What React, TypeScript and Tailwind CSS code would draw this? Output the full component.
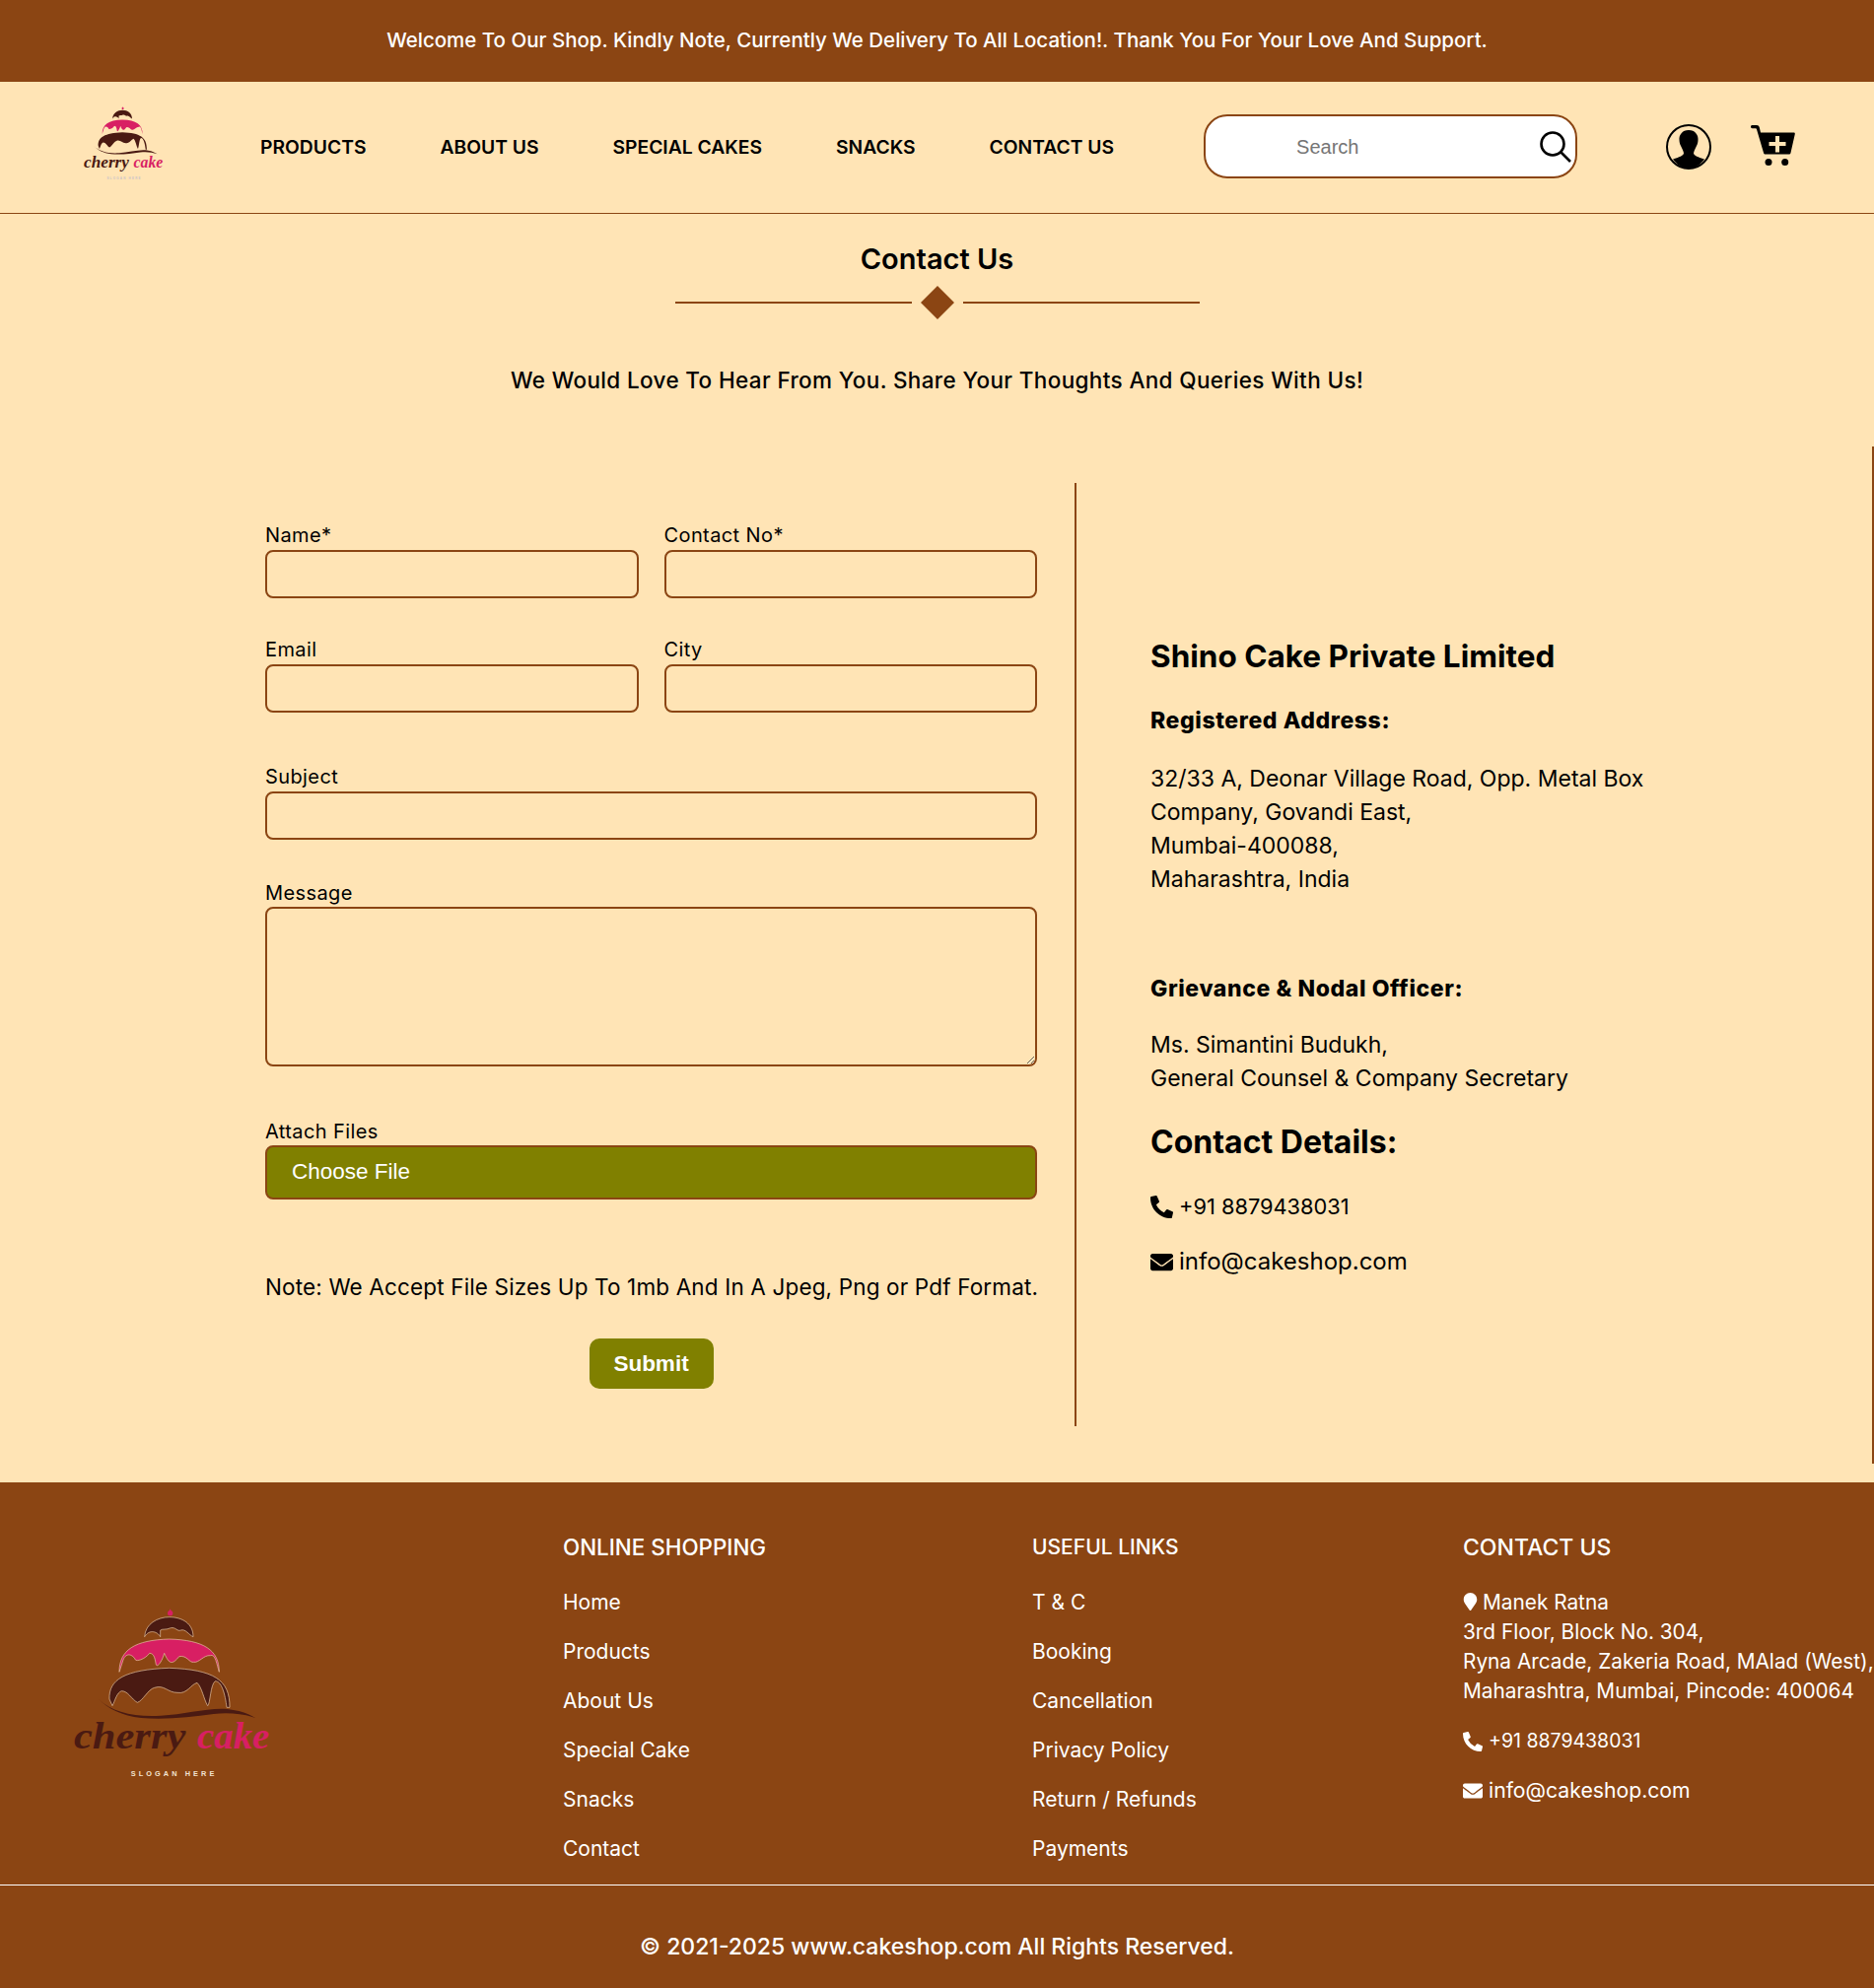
import { FaEnvelope, FaMapMarker, FaPhoneAlt } from "react-icons/fa";

function CakeLogo({ className, halo }: { className: string; halo?: boolean }) {
  const edge = halo ? "#e8c9a8" : "none";
  return (
    <svg viewBox="0 0 750 600" preserveAspectRatio="none" className={className}>
      <circle cx="368" cy="83" r="8" fill="#d81f63" />
      <path d="M368 70l4 8h-8z" fill="#d81f63" />
      <path
        d="M290 155C292 115 330 95 365 95C405 95 438 115 438 155C425 150 415 130 400 135C390 140 385 125 370 128C355 135 345 130 338 135L338 155C330 140 305 130 290 155Z"
        fill="#4a1a12"
        stroke={edge}
        strokeWidth="2"
      />
      <path
        d="M213 262C213 195 260 165 365 162C470 165 517 195 517 262C510 240 505 205 490 212C470 210 455 235 440 232C425 235 420 210 395 215C375 240 365 240 350 205C345 225 330 250 325 240C322 225 320 205 305 205C290 225 265 230 262 225C255 210 235 200 225 225Z"
        fill="#d81f63"
        stroke={edge}
        strokeWidth="2"
      />
      <path
        d="M183 345C180 285 230 255 365 250C500 255 550 285 549 370L540 370C535 330 525 290 505 290C490 300 490 360 482 365C470 345 465 310 450 295C430 300 420 330 390 325C360 325 350 300 320 310C300 315 285 350 268 355C250 345 240 320 220 320C205 325 200 350 192 365Z"
        fill="#4a1a12"
        stroke={edge}
        strokeWidth="2"
      />
      <path
        d="M150 345C190 385 260 400 340 395C420 392 500 365 560 378C590 382 610 392 628 402C590 390 550 385 500 390C430 400 350 408 280 402C220 395 180 375 150 345Z"
        fill="#4a1a12"
      />
      <text
        x="75"
        y="496"
        textLength="340"
        lengthAdjust="spacingAndGlyphs"
        fontSize="112"
        fontStyle="italic"
        fontWeight="700"
        fontFamily="'Liberation Serif', serif"
        fill="#4a1a12"
      >
        cherry
      </text>
      <text
        x="450"
        y="496"
        textLength="220"
        lengthAdjust="spacingAndGlyphs"
        fontSize="112"
        fontStyle="italic"
        fontWeight="700"
        fontFamily="'Liberation Serif', serif"
        fill="#d81f63"
      >
        cake
      </text>
      <text
        x="248"
        y="580"
        textLength="254"
        fontSize="22"
        fontWeight="700"
        fontFamily="'Liberation Sans', sans-serif"
        fill={halo ? "#f3e3d0" : "#c9c3c9"}
      >
        SLOGAN HERE
      </text>
    </svg>
  );
}

const labelClass = "block h-[27px] text-[20px] leading-[29px] tracking-[0.4px]";

function Field({ label, className }: { label: string; className?: string }) {
  return (
    <div className={className}>
      <label className={`${labelClass} mb-[2px]`}>{label}</label>
      <input className="block w-full h-[49px] rounded-[8px] border-2 border-[#8b4513] bg-transparent" />
    </div>
  );
}

const shoppingLinks = ["Home", "Products", "About Us", "Special Cake", "Snacks", "Contact"];
const usefulLinks = ["T & C", "Booking", "Cancellation", "Privacy Policy", "Return / Refunds", "Payments"];

function LinkColumn({
  title,
  titleClass,
  links,
  className,
}: {
  title: string;
  titleClass: string;
  links: string[];
  className: string;
}) {
  return (
    <div className={className}>
      <h4 className={`h-[30px] leading-[30px] font-medium ${titleClass}`}>{title}</h4>
      <ul className="mt-[26px] flex flex-col gap-[20px]">
        {links.map((l) => (
          <li key={l} className="h-[30px] text-[21px] leading-[30px]">
            {l}
          </li>
        ))}
      </ul>
    </div>
  );
}

export default function App() {
  return (
    <div className="w-full min-h-[2017px] overflow-hidden bg-[#ffe4b5] text-black font-[Inter,sans-serif]">
      <div className="h-[83px] bg-[#8b4513] flex items-center justify-center text-white text-[20.5px] font-medium">
        Welcome To Our Shop. Kindly Note, Currently We Delivery To All Location!. Thank You For Your Love And Support.
      </div>

      <header className="h-[134px] border-b border-[#8b4513] flex items-center pl-[75px]">
        <CakeLogo className="w-[101px] h-[87px] -mt-[16px] shrink-0" />
        <nav className="ml-[88px] flex gap-[75px] text-[19.3px] font-semibold whitespace-nowrap">
          <a>PRODUCTS</a>
          <a>ABOUT US</a>
          <a>SPECIAL CAKES</a>
          <a>SNACKS</a>
          <a>CONTACT US</a>
        </nav>
        <div className="ml-[91px] -mt-[2px] w-[379px] h-[65px] shrink-0 rounded-[24px] border-2 border-[#8b4513] bg-white flex items-center pl-[92px] pr-[3px] font-['Liberation_Sans',sans-serif] text-[20px] text-[#757575]">
          <span className="flex-1">Search</span>
          <svg viewBox="0 0 34 34" className="w-[34px] h-[34px]" fill="none" stroke="#000" strokeWidth="2.6">
            <circle cx="14" cy="14" r="11.5" />
            <path d="M22.5 22.5L32 32" />
          </svg>
        </div>
        <svg viewBox="0 0 46 46" className="ml-[90px] -mt-[2px] w-[46px] h-[46px] shrink-0">
          <circle cx="23" cy="23" r="22" fill="none" stroke="#000" strokeWidth="2" />
          <path
            d="M23 6C16.500 6 13 11 13.500 16C13.500 19 14.500 21 15.500 23C16.500 25 18 28 18 30C16 33 11 34 7 35.500C11 41 17 45 23 45C29 45 35 41 39 35.500C35 34 30 33 28 30C28 28 29.500 25 30.500 23C31.500 21 32.500 19 32.500 16C33 11 29.500 6 23 6Z"
            fill="#000"
          />
        </svg>
        <svg viewBox="0 0 45 42" className="ml-[40px] -mt-[4px] w-[45px] h-[42px] shrink-0">
          <path
            d="M1.500 0H6C7.500 0 8.300 .8 8.700 2L10 7.500H43.500C44.500 7.500 45 8.200 44.800 9L40.500 28C40.300 29 39.500 29.500 38.500 29.500H15C14 29.500 13.200 29 13 28L6 4.300C5.800 3.500 5.400 3.200 4.500 3.200H1.500C.6 3.200 0 2.500 0 1.600C0 .7 .6 0 1.500 0Z"
            fill="#000"
          />
          <circle cx="18" cy="37.500" r="3.500" fill="#000" />
          <circle cx="34.700" cy="37.500" r="3.500" fill="#000" />
          <path d="M25 11h4v6h6.500v4H29v6.500h-4V21h-6.500v-4H25z" fill="#ffe4b5" />
        </svg>
      </header>

      <section className="flex flex-col items-center">
        <h1 className="mt-[25px] h-[42px] text-[29px] leading-[42px] font-semibold">Contact Us</h1>
        <div className="mt-[6px] flex items-center h-[34px]">
          <span className="w-[240px] h-[2px] bg-[#8b4513]" />
          <span className="mx-[14px] w-[24px] h-[24px] rotate-45 bg-[#8b4513]" />
          <span className="w-[240px] h-[2px] bg-[#8b4513]" />
        </div>
        <p className="mt-[45px] h-[33px] text-[22.5px] leading-[33px] tracking-[0.36px] font-medium">
          We Would Love To Hear From You. Share Your Thoughts And Queries With Us!
        </p>
      </section>

      <section className="mt-[51px] h-[1032px] pt-[37px] border-r-2 border-[#8b4513]">
        <div className="flex h-[957px] pl-[269px]">
          <form className="w-[783px] shrink-0 pt-[39px]">
            <div className="grid grid-cols-2 gap-x-[26px]">
              <Field label="Name*" />
              <Field label="Contact No*" />
            </div>
            <div className="mt-[38px] grid grid-cols-2 gap-x-[26px]">
              <Field label="Email" />
              <Field label="City" />
            </div>
            <Field label="Subject" className="mt-[51px]" />
            <div className="mt-[40px]">
              <label className={`${labelClass} mb-px`}>Message</label>
              <textarea className="block w-full h-[162px] rounded-[8px] border-2 border-[#8b4513] bg-transparent" />
            </div>
            <div className="mt-[52px]">
              <label className={`${labelClass} mb-px`}>Attach Files</label>
              <div className="h-[55px] rounded-[8px] border-2 border-[#8b4513] bg-[#808000] text-white font-['Liberation_Sans',sans-serif] text-[22.5px] pl-[25px] flex items-center pb-px">
                Choose File
              </div>
            </div>
            <p className="mt-[74px] h-[30px] text-[22.5px] leading-[30px] tracking-[0.15px] whitespace-nowrap">
              Note: We Accept File Sizes Up To 1mb And In A Jpeg, Png or Pdf Format.
            </p>
            <div className="mt-[37px] flex justify-center">
              <button
                type="button"
                className="w-[126px] h-[51px] rounded-[10px] bg-[#808000] text-white font-['Liberation_Sans',sans-serif] font-bold text-[22.5px]"
              >
                Submit
              </button>
            </div>
          </form>

          <div className="ml-[38px] border-l-2 border-[#8b4513] pl-[75px] pt-[156px] text-[23px] leading-[34px]">
            <h2 className="h-[40px] text-[31.5px] leading-[40px] font-bold">Shino Cake Private Limited</h2>
            <h3 className="mt-[28px] h-[34px] font-extrabold tracking-[0.6px]">Registered Address:</h3>
            <p className="mt-[25px] whitespace-nowrap">
              32/33 A, Deonar Village Road, Opp. Metal Box
              <br />
              Company, Govandi East,
              <br />
              Mumbai-400088,
              <br />
              Maharashtra, India
            </p>
            <h3 className="mt-[77px] h-[34px] font-extrabold tracking-[0.6px]">Grievance &amp; Nodal Officer:</h3>
            <p className="mt-[23px] whitespace-nowrap">
              Ms. Simantini Budukh,
              <br />
              General Counsel &amp; Company Secretary
            </p>
            <h2 className="mt-[28px] h-[40px] text-[32px] leading-[40px] font-bold">Contact Details:</h2>
            <p className="mt-[28px] flex items-center gap-[6px] text-[21.8px]">
              <FaPhoneAlt className="w-[23px] h-[23px]" /> +91 8879438031
            </p>
            <p className="mt-[22px] flex items-center gap-[6px] text-[24px]">
              <FaEnvelope className="w-[23px] h-[23px]" /> info@cakeshop.com
            </p>
          </div>
        </div>
      </section>

      <footer className="mt-[19px] h-[514px] bg-[#8b4513] text-white flex flex-col">
        <div className="h-[409px] border-b border-white pl-[50px] pt-[51px] flex overflow-hidden">
          <CakeLogo halo className="w-[250px] h-[200px] mt-[54px] shrink-0" />
          <LinkColumn
            title="ONLINE SHOPPING"
            titleClass="text-[22.4px]"
            links={shoppingLinks}
            className="ml-[271px] w-[476px] shrink-0"
          />
          <LinkColumn title="USEFUL LINKS" titleClass="text-[21px]" links={usefulLinks} className="w-[437px] shrink-0" />
          <div className="shrink-0 whitespace-nowrap">
            <h4 className="h-[30px] text-[23px] leading-[30px] font-medium">CONTACT US</h4>
            <p className="mt-[26px] text-[20.8px] leading-[30px]">
              <FaMapMarker className="inline w-[15px] h-[18px] mr-[5px] -mt-[4px]" />
              Manek Ratna
              <br />
              3rd Floor, Block No. 304,
              <br />
              Ryna Arcade, Zakeria Road, MAlad (West),
              <br />
              Maharashtra, Mumbai, Pincode: 400064
            </p>
            <p className="mt-[21px] h-[30px] flex items-center gap-[6px] text-[19.5px]">
              <FaPhoneAlt className="w-[20px] h-[20px]" /> +91 8879438031
            </p>
            <p className="mt-[20px] h-[30px] flex items-center gap-[6px] text-[21.2px]">
              <FaEnvelope className="w-[20px] h-[20px]" /> info@cakeshop.com
            </p>
          </div>
        </div>
        <div className="flex-1 flex items-center justify-center pt-[20px] text-[23px] font-medium">
          © 2021-2025 www.cakeshop.com All Rights Reserved.
        </div>
      </footer>
    </div>
  );
}
